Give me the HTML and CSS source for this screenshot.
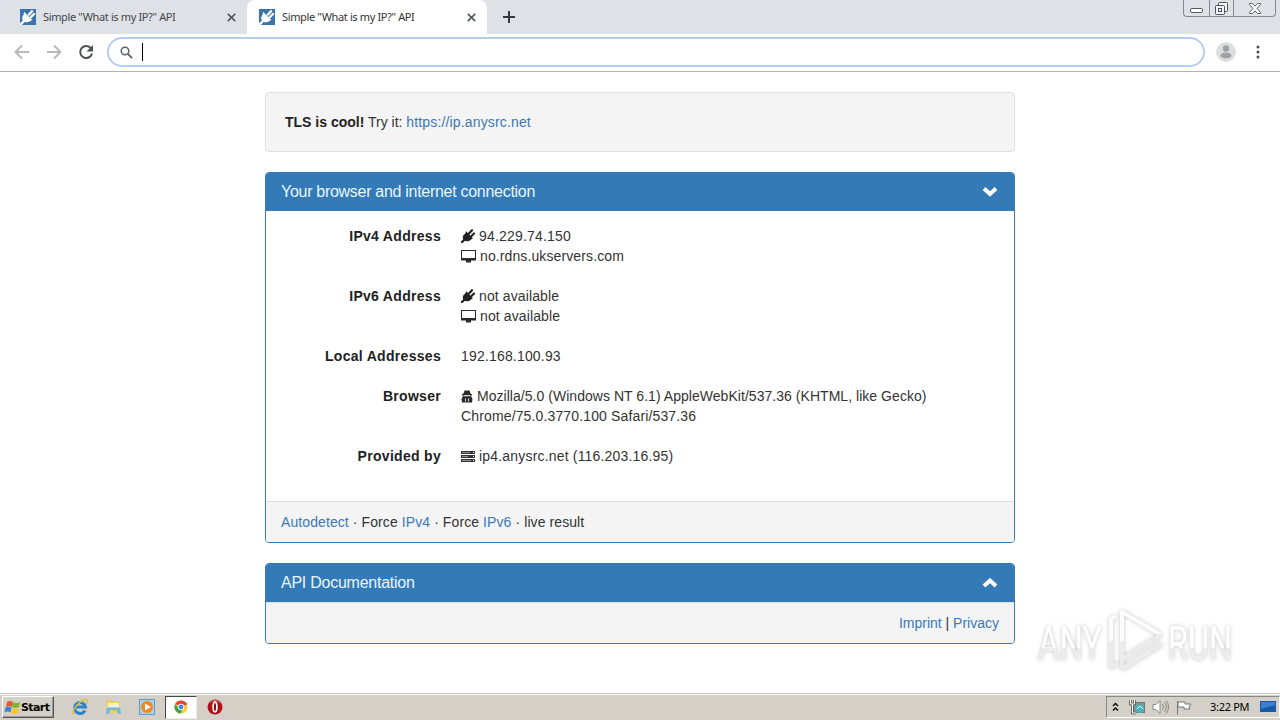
FILE: index.html
```html
<!DOCTYPE html>
<html lang="en">
<head>
  <meta charset="UTF-8" />
  <meta name="viewport" content="width=device-width, initial-scale=1.0" />
  <title>Simple "What is my IP?" API</title>
  <link rel="stylesheet" href="styles.css">
</head>
<body>
  <svg class="defs" width="0" height="0">
    <symbol id="favicon" viewBox="0 0 16 16">
      <rect width="16" height="16" fill="#3a74a8"/>
      <path d="M.5 15.500l4-4M9 5.500l3-3.300M11 8l3-3" stroke="#fff" stroke-width="2.400" stroke-linecap="round"/>
      <path d="M4 2.800l8.500 8.200c-1 0-2.500 2.200-5 2.200-2.500.5-4-.7-4.500-1.500C1.500 9.500 2.500 7 3.500 6z" fill="#fff"/>
    </symbol>
    <symbol id="close" viewBox="0 0 8 8">
      <path d="M.7.7l6.600 6.600M7.300.7L.7 7.300" stroke="#55595e" stroke-width="1.500"/>
    </symbol>
    <symbol id="plug" viewBox="0 0 14 14">
      <path d="M.8 13.200l3-3M8 4.500l3-3.300M10 7.500l3-3" stroke="#222" stroke-width="2.200" stroke-linecap="round"/>
      <path d="M5 2l7 7.500c-1.500 0-2 1.800-4 2.500-2 .5-3.800.3-5-.5C1.200 9.500 1.500 7 3 5.500c1-.8 2-1.500 2-3.500z" fill="#222"/>
    </symbol>
    <symbol id="monitor" viewBox="0 0 15 13">
      <path fill="#2b2b2b" fill-rule="evenodd" d="M0 0h15v10.500H10V12.500H5v-2H0zM1 1v7h13V1z"/>
    </symbol>
  </svg>

  <div class="tabs">
    <div class="tab">
      <svg class="favicon"><use href="#favicon"/></svg>
      <span class="tab-title">Simple "What is my IP?" API</span>
      <svg class="close"><use href="#close"/></svg>
    </div>
    <div class="tab active">
      <svg class="favicon"><use href="#favicon"/></svg>
      <span class="tab-title">Simple "What is my IP?" API</span>
      <svg class="close"><use href="#close"/></svg>
    </div>
    <svg class="new-tab" viewBox="0 0 12 12"><path d="M6 0v12M0 6h12" stroke="#33363b" stroke-width="2"/></svg>
    <div class="window-buttons">
      <span class="minimize"><svg width="13" height="5"><rect x=".5" y=".5" width="12" height="4" rx="1.500" fill="#fff" stroke="#555a62"/></svg></span>
      <span class="restore"><svg width="13" height="13" fill="#f2f3f5" stroke="#4d525b"><rect x="3.500" y=".5" width="9" height="9" rx="1"/><rect x=".5" y="3.500" width="9" height="9" rx="1"/><rect x="3.500" y="6.500" width="3" height="3"/></svg></span>
      <span class="quit"><svg width="12" height="11" fill="#fff" stroke="#5a5f68"><path d="M.5.5h3L6 3.300 8.500.5h3v1L8 5.500l3.500 4v1h-3L6 7.700 3.500 10.500h-3v-1L4 5.500.5 1.500z"/></svg></span>
    </div>
  </div>

  <div class="toolbar">
    <svg class="nav" viewBox="0 0 16 16"><path d="M15 8H2M8 1.500L1.500 8 8 14.500" fill="none" stroke="#b8b9bb" stroke-width="1.900"/></svg>
    <svg class="nav" viewBox="0 0 16 16"><path d="M1 8h13M8 1.500L14.500 8 8 14.500" fill="none" stroke="#b8b9bb" stroke-width="1.900"/></svg>
    <svg class="nav" viewBox="0 0 16 16"><path d="M13 4.400A6 6 0 1 0 14 9.500" fill="none" stroke="#4c4f54" stroke-width="2"/><path d="M15 1v6.500H8.500z" fill="#4c4f54"/></svg>
    <div class="omnibox">
      <svg width="13" height="13" fill="none" stroke="#5f6368" stroke-width="1.500"><circle cx="5" cy="5" r="3.800"/><path d="M7.800 7.800l4.300 4.300" stroke-width="1.900"/></svg>
      <span class="caret"></span>
    </div>
    <svg class="avatar" viewBox="0 0 20 20"><circle cx="10" cy="10" r="10" fill="#dddedf"/><circle cx="10" cy="6.500" r="3.200" fill="#a1a1a1"/><ellipse cx="10" cy="13.500" rx="5.600" ry="2.900" fill="#a1a1a1"/></svg>
    <svg class="menu" viewBox="0 0 4 14" fill="#4c4f54"><circle cx="2" cy="2" r="1.500"/><circle cx="2" cy="7" r="1.500"/><circle cx="2" cy="12" r="1.500"/></svg>
  </div>

  <main class="page">
    <div class="container">
      <div class="well"><b>TLS is cool!</b> Try it: <a>https://ip.anysrc.net</a></div>

      <section class="panel">
        <h3 class="panel-heading">
          <span>Your browser and internet connection</span>
          <svg class="chevron" viewBox="0 0 16 11"><path d="M2 1.500L8 7l6-5.500" fill="none" stroke="#fff" stroke-width="4"/></svg>
        </h3>
        <dl class="panel-body">
          <dt>IPv4 Address</dt>
          <dd><svg class="plug"><use href="#plug"/></svg> <span class="ip">94.229.74.150</span><br><svg class="monitor"><use href="#monitor"/></svg> no.rdns.ukservers.com</dd>
          <dt>IPv6 Address</dt>
          <dd><svg class="plug"><use href="#plug"/></svg> not available<br><svg class="monitor"><use href="#monitor"/></svg> not available</dd>
          <dt>Local Addresses</dt>
          <dd class="ip">192.168.100.93</dd>
          <dt>Browser</dt>
          <dd class="agent"><svg class="spy" viewBox="0 0 12 13"><path d="M2.500 3.500L3.500.5h5l1 3 1.500.7v1.300H1V4.200zM2 6h8l1.500 3-.5 3.500H1L.5 9z" fill="#2b2b2b"/><path d="M3 5.800h6M4.500 8.500v3M7.500 8.500v3" stroke="#fff" stroke-width=".8"/></svg> Mozilla/5.0 (Windows NT 6.1) AppleWebKit/537.36 (KHTML, like Gecko)<br><span class="version">Chrome/75.0.3770.100 Safari/537.36</span></dd>
          <dt>Provided by</dt>
          <dd class="ip"><svg class="server" viewBox="0 0 14 12"><path d="M0 1.500h14M0 5.500h14M0 9.500h14" stroke="#333" stroke-width="3"/><path d="M1 1.500h8M1 5.500h6M1 9.500h9" stroke="#bbb" stroke-width=".7"/><path d="M12 1.500h1M12 5.500h1M12 9.500h1" stroke="#fff"/></svg> ip4.anysrc.net (116.203.16.95)</dd>
        </dl>
        <div class="panel-footer links"><a>Autodetect</a> · Force <a>IPv4</a> · Force <a>IPv6</a> · live result</div>
      </section>

      <section class="panel">
        <h3 class="panel-heading docs">
          <span>API Documentation</span>
          <svg class="chevron" viewBox="0 0 16 11"><path d="M2 8l6-5.500L14 8" fill="none" stroke="#fff" stroke-width="4"/></svg>
        </h3>
        <div class="panel-footer legal"><a>Imprint</a> | <a>Privacy</a></div>
      </section>
    </div>

    <svg class="watermark" viewBox="0 0 210 76">
      <defs>
        <linearGradient id="fade" x1="0" y1="0" x2="0" y2="1">
          <stop offset="0" stop-color="#fff"/><stop offset=".58" stop-color="#fff"/><stop offset=".58" stop-color="#ececec"/><stop offset="1" stop-color="#f1f1f1"/>
        </linearGradient>
      </defs>
      <g fill="url(#fade)">
        <text x="8" y="56" textLength="64" lengthAdjust="spacingAndGlyphs">ANY</text>
        <text x="138" y="56" textLength="64" lengthAdjust="spacingAndGlyphs">RUN</text>
      </g>
      <g fill="none" stroke="#fcfcfc" stroke-width="4" stroke-linejoin="round">
        <path d="M92 37V8l39 23"/>
        <path d="M86 12l-5 3v22"/>
        <path d="M92 37v18l39-24M81 37v26l7-4M92 65l40-25M92 55v10" stroke="#ececec"/>
      </g>
    </svg>
  </main>

  <footer class="taskbar">
    <div class="start">
      <svg width="17" height="16" viewBox="0 0 17 16"><path d="M3 3q3-2 6 0L8 8Q5 6 2 8z" fill="#e65a2a"/><path d="M9 3q3 2 7 0l-1 5q-4 2-7 0z" fill="#80b52f"/><path d="M1.500 8.500q3-2 6 0l-1 5q-3-2-6 0z" fill="#3986cf"/><path d="M8 9q3 2 7 0l-1 5q-4 2-7 0z" fill="#f7c52e"/></svg>
      <span>Start</span>
    </div>
    <div class="launch">
      <span><svg width="18" height="18" viewBox="0 0 18 18"><path d="M14 12.500A5.500 5.500 0 1 1 14.500 9H5" fill="none" stroke="#2587d2" stroke-width="3"/><path d="M3 16C-2 15 11-1 16 2c1 1 0 3-1 4" fill="none" stroke="#e9bd36" stroke-width="1.500"/></svg></span>
      <span><svg width="17" height="16" viewBox="0 0 17 16"><path d="M1 3l1-2h5l1 2h7v11H1z" fill="#e9cb68"/><path d="M3 4h11v4H3z" fill="#fff3ae"/><path d="M2 8h13l1 7h-3l-1-4H5l-1 4H1z" fill="#74b8de"/><path d="M2 8h13" stroke="#d9eff7"/></svg></span>
      <span><svg width="16" height="16"><rect x=".5" y=".5" width="15" height="15" fill="#a9d0ef" stroke="#5b9bd2"/><circle cx="8" cy="8" r="6" fill="#f08a19"/><path d="M6 4.500v7L12 8z" fill="#fff"/></svg></span>
      <span class="pressed"><svg width="14" height="14" viewBox="0 0 16 16"><circle cx="8" cy="8" r="7.500" fill="#fbcd32"/><path d="M8 8L1.500 4.300A7.500 7.500 0 0 1 14.700 4.500z" fill="#dc4437"/><path d="M1.500 4.300A7.500 7.500 0 0 0 7.500 15.500L10 10 5 10z" fill="#32a353"/><path d="M8 4.500h6.700" stroke="#dc4437" stroke-width="2"/><circle cx="8" cy="8" r="3.600" fill="#fff"/><circle cx="8" cy="8" r="2.800" fill="#4286ef"/></svg></span>
      <span><svg width="16" height="16"><circle cx="8" cy="8" r="7.500" fill="#b01118"/><path d="M3 4a6 6 0 0 1 10 0" stroke="#e17876" fill="none"/><ellipse cx="8" cy="8" rx="1.900" ry="4.800" fill="#8e090e" stroke="#fff" stroke-width="1.700"/></svg></span>
    </div>
    <div class="tray">
      <svg width="7" height="10" fill="none" stroke="#111" stroke-width="1.500"><path d="M1 4l2.500-2.500L6 4M1 8.500L3.500 6 6 8.500"/></svg>
      <svg class="network" width="17" height="16"><rect x="4.500" y="3.500" width="11" height="10" fill="#6f9e98" stroke="#6d7777"/><circle cx="11" cy="10" r="4" fill="#49b4bd"/><path d="M8 10q3-5 6 0" stroke="#dff5ee" fill="none"/><path d="M1.500 1v4h4V1M3.500 5v9H7" fill="none" stroke="#555" stroke-width="2.600"/><path d="M1.500 1v4h4V1M3.500 5v9H7" fill="none" stroke="#fff"/></svg>
      <svg class="sound" width="17" height="16" fill="none" stroke="#888"><path d="M1 5.500h3L8 1.500v13l-4-4H1z" fill="#fff"/><path d="M10.500 5q2 3 0 6M12.500 3q3.500 5 0 10M14.500 1.500q4 6.500 0 13"/></svg>
      <svg class="flag" width="16" height="15"><path d="M1.500 1v13.500M2 2h7v2h6l-2 3 1 2H8V7H2z" fill="#fff" stroke="#777"/></svg>
      <span class="clock">3:22 PM</span>
      <svg class="desktop" width="16" height="13"><rect width="16" height="11" fill="#1858a8"/><path d="M1 1h14v3L1 8z" fill="#3d7fca"/><path d="M9 11h6v1H9z" fill="#c9d9e9"/></svg>
    </div>
  </footer>
</body>
</html>
```
FILE: styles.css
```css
* {
  box-sizing: border-box;
}
body {
  margin: 0;
  height: 720px;
  overflow: hidden;
  display: flex;
  flex-direction: column;
  background: #fff;
  color: #333;
  font: 14px/20px "Liberation Sans", Arial, sans-serif;
}
svg {
  flex-shrink: 0;
}
.defs {
  position: absolute;
}
.tabs {
  height: 34px;
  display: flex;
  background: #dee1e6;
  flex-shrink: 0;
}
.tab {
  height: 34px;
  width: 247px;
  padding: 0 11px 0 20px;
  display: flex;
  align-items: center;
  font: 11px "Noto Sans", sans-serif;
  color: #45484d;
}
.tab.active {
  width: 240px;
  padding: 0 11px 0 12px;
  border-radius: 8px 8px 0 0;
  background: #fff;
  color: #333;
}
.favicon {
  width: 16px;
  height: 16px;
}
.tab-title {
  flex: 1;
  margin-left: 7px;
  margin-top: -2px;
  letter-spacing: -0.36px;
  white-space: nowrap;
}
.close {
  width: 9px;
  height: 9px;
}
.new-tab {
  width: 12px;
  height: 12px;
  margin: 11px 0 0 16px;
}
.window-buttons {
  display: flex;
  width: 93px;
  height: 17px;
  margin: 0 4px 0 auto;
  border: 1px solid #858a93;
  border-top: 0;
  border-radius: 0 0 4px 4px;
}
.window-buttons span {
  display: flex;
  align-items: center;
  justify-content: center;
  width: 25px;
}
.window-buttons .minimize {
  padding-top: 4px;
}
.window-buttons .restore {
  border: solid #858a93;
  border-width: 0 1px;
}
.window-buttons .quit {
  width: 41px;
}
.toolbar {
  height: 38px;
  flex-shrink: 0;
  display: flex;
  align-items: center;
  padding: 0 20px 1px 14px;
  border-bottom: 1px solid #b2b2b2;
}
.nav {
  width: 16px;
  height: 16px;
  margin-right: 16px;
}
.omnibox {
  flex: 1;
  height: 30px;
  margin-left: -3px;
  border: 2px solid #b6cdee;
  border-radius: 15px;
  display: flex;
  align-items: center;
  padding-left: 11px;
}
.caret {
  width: 1px;
  height: 18px;
  margin-left: 9px;
  background: #000;
}
.avatar {
  width: 20px;
  height: 20px;
  margin-left: 11px;
}
.menu {
  width: 4px;
  height: 14px;
  margin-left: 20px;
}
.page {
  flex: 1;
  position: relative;
  padding-top: 20px;
}
.container {
  width: 750px;
  margin: 0 auto;
}
a {
  color: #3b78b5;
}
.well {
  height: 60px;
  padding: 19px;
  margin-bottom: 20px;
  background: #f4f4f4;
  border: 1px solid #e0e0e0;
  border-radius: 4px;
}
.well b {
  color: #222;
}
.well a {
  letter-spacing: 0.15px;
}
.panel {
  margin-bottom: 20px;
  border: 1px solid #337ab7;
  border-radius: 4px;
  overflow: hidden;
}
.panel-heading {
  height: 38px;
  margin: 0;
  padding: 0 16px 0 15px;
  display: flex;
  align-items: center;
  justify-content: space-between;
  background: #337ab7;
  color: #e8f7ff;
  font-size: 16px;
  font-weight: normal;
  letter-spacing: -0.29px;
}
.chevron {
  width: 16px;
  height: 11px;
}
.panel-body {
  margin: 0;
  padding: 15px 15px 35px;
  display: grid;
  grid-template-columns: 160px 1fr;
  gap: 20px;
}
dt {
  text-align: right;
  font-weight: bold;
  letter-spacing: 0.3px;
  color: #222;
}
dd {
  margin: 0;
  letter-spacing: 0.11px;
}
dd svg {
  vertical-align: -2px;
}
.ip {
  letter-spacing: 0.18px;
}
.agent {
  letter-spacing: 0.04px;
}
.version {
  letter-spacing: 0.14px;
}
.plug {
  width: 14px;
  height: 14px;
}
.monitor {
  width: 15px;
  height: 13px;
}
.spy {
  width: 12px;
  height: 13px;
}
.server {
  width: 14px;
  height: 12px;
}
.panel-footer {
  height: 41px;
  padding: 10px 15px;
  background: #f4f4f4;
  border-top: 1px solid #ddd;
}
.links {
  letter-spacing: 0.09px;
}
.docs {
  letter-spacing: -0.25px;
}
.legal {
  text-align: right;
}
.watermark {
  position: absolute;
  left: 1030px;
  top: 532px;
  width: 210px;
  height: 76px;
  overflow: visible;
  filter: drop-shadow(0 0 2px #c4c4c4);
  font: 400 48px "Roboto", sans-serif;
}
.taskbar {
  height: 27px;
  flex-shrink: 0;
  display: flex;
  align-items: center;
  background: #d4d0c8;
  border-top: 1px solid #c8c6c1;
  box-shadow: inset 0 1px #fff;
  padding: 0 0 0 2px;
}
.start {
  width: 52px;
  height: 22px;
  display: flex;
  align-items: center;
  border: 1px solid;
  border-color: #fff #555 #555 #fff;
  box-shadow: inset -1px -1px #999;
  color: #000;
  font: bold 11px "DejaVu Sans", sans-serif;
  letter-spacing: -0.6px;
  padding-left: 1px;
}
.launch {
  display: flex;
  margin-left: 9px;
}
.launch span {
  width: 33.600px;
  height: 23px;
  display: flex;
  align-items: center;
  justify-content: center;
}
.launch .pressed {
  width: 32px;
  margin: 0 1px;
  background: #fff;
  border: 1px solid #777;
  border-color: #444 #eee #eee #444;
}
.tray {
  width: 174px;
  height: 22px;
  margin-left: auto;
  display: flex;
  align-items: center;
  border: 1px solid;
  border-color: #888 #fff #fff #888;
  padding-left: 5px;
  color: #000;
  font: 11px "Noto Sans", sans-serif;
}
.network {
  margin-left: 10px;
}
.sound {
  margin-left: 6px;
}
.flag {
  margin-left: 7px;
}
.clock {
  width: 40px;
  margin: -2px 0 0 18px;
  letter-spacing: -0.3px;
  white-space: nowrap;
}
.desktop {
  margin-left: 10px;
}
```
